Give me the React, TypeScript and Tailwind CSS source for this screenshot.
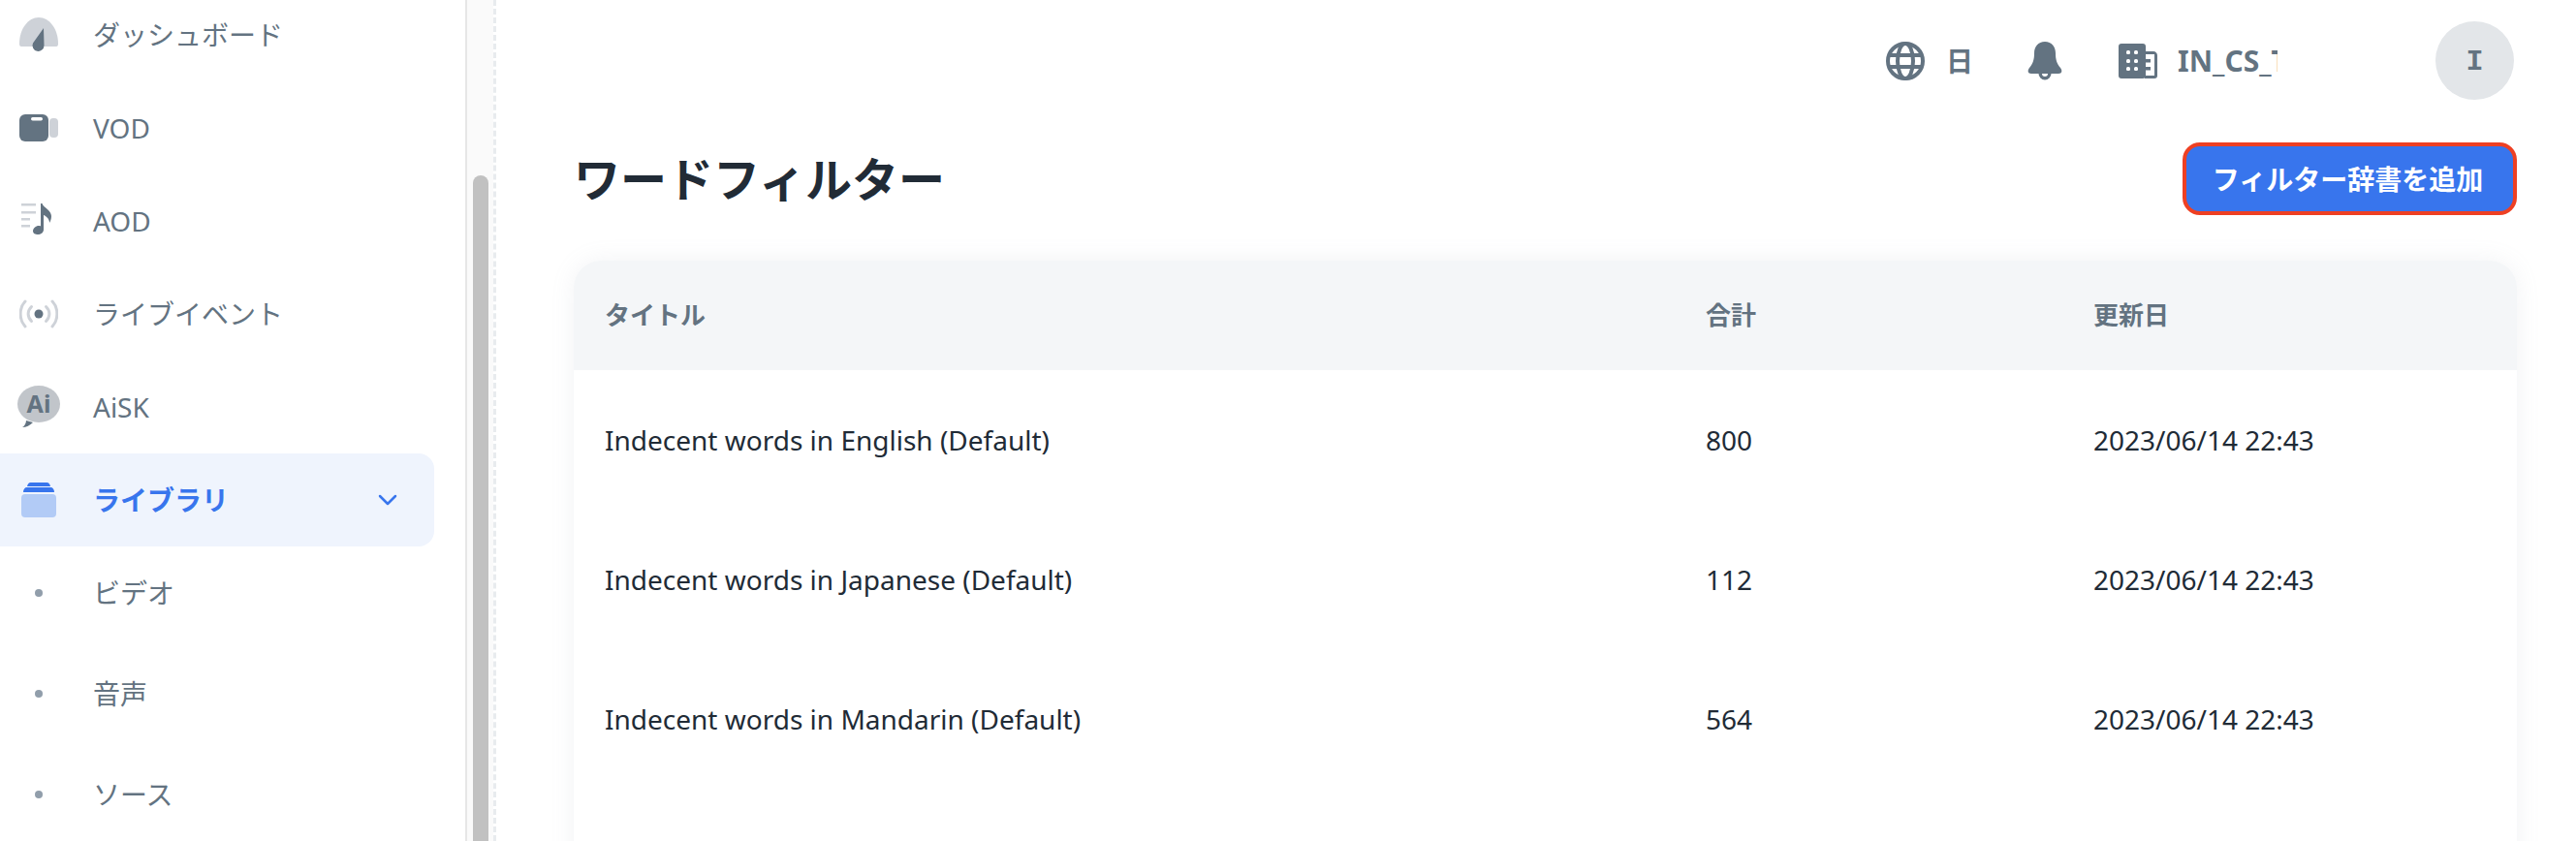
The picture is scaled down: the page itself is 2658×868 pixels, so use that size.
import React from "react";

const FONT = "font-['Noto_Sans','Noto_Sans_CJK_JP',sans-serif]";

function GaugeIcon() {
  return (
    <svg width="40" height="40" viewBox="0 0 40 40">
      <path d="M0 29C0 14 9 2 20 2s20 12 20 27c0 2-.5 3-2 3H2c-1.500 0-2-1-2-3z" fill="#ced2d8" />
      <path d="M25 13L25.500 31a6 6 0 1 1-11.500-2.500z" fill="#637381" />
    </svg>
  );
}

function VideoIcon() {
  return (
    <svg width="40" height="28" viewBox="0 0 40 28">
      <rect x="31" y="4" width="9" height="20" rx="4" fill="#ced2d8" />
      <rect x="0" y="0" width="30" height="28" rx="6" fill="#637381" />
      <rect x="12" y="3" width="12" height="3.500" rx="1.700" fill="#fff" />
    </svg>
  );
}

function AudioIcon() {
  return (
    <svg width="40" height="32" viewBox="0 0 40 32" className="-mt-1">
      <g fill="#ced2d8">
        <rect x="2" y="0" width="15" height="2.500" />
        <rect x="2" y="8" width="15" height="2.500" />
        <rect x="2" y="15" width="9" height="2.500" />
        <rect x="2" y="22" width="9" height="2.500" />
      </g>
      <path d="M22 0h1.500c1 4 9.500 7 9.500 13 0 3-1 5.500-2 7 .3-4-4-7.500-6-8v15c0 3-3 5-6 5-2.500 0-5-1-5-3.500 0-3 3-5.500 6-5.500 1 0 1.500.2 2 .4z" fill="#637381" />
    </svg>
  );
}

function LiveIcon() {
  return (
    <svg width="40" height="30" viewBox="0 0 40 30" fill="none" strokeLinecap="round">
      <path d="M6 2C-.5 9-.5 21 6 28M34 2c6.500 7 6.500 19 0 26" stroke="#ced2d8" strokeWidth="3" />
      <path d="M12.500 7.500C8 12 8 18 12.500 22.500M27.500 7.500c4.500 4.500 4.500 10.500 0 15" stroke="#ced2d8" strokeWidth="3" />
      <circle cx="20" cy="15" r="4.500" fill="#637381" />
    </svg>
  );
}

function AiIcon() {
  return (
    <div className="relative w-[44px] h-[44px]">
      <svg width="44" height="44" viewBox="0 0 44 44" className="absolute left-0 top-0">
        <path d="M5 43c2-1 4-4 4-7l7 2c-3 3-7 5-11 5z" fill="#637381" />
        <ellipse cx="22" cy="19" rx="22" ry="19" fill="#c1c5ca" />
      </svg>
      <span className="absolute inset-0 text-center text-[25px] leading-[36px] font-bold text-[#637381]">Ai</span>
    </div>
  );
}

function LibraryIcon() {
  return (
    <svg width="36" height="36" viewBox="0 0 36 36">
      <path d="M6 4c.5-2.500 2-4 3.500-4h17c1.500 0 3 1.500 3.500 4z" fill="#3875ed" />
      <path d="M2 10c0-3 1.500-5 4-5h24c2.500 0 4 2 4 5z" fill="#3875ed" />
      <rect x="0" y="12" width="36" height="24" rx="4" fill="#b2cbf6" />
    </svg>
  );
}

function NavRow({ icon, label }: { icon: React.ReactNode; label: string }) {
  return (
    <div className="h-24 flex items-center">
      <div className="w-[80px] flex justify-center pl-0">{icon}</div>
      <span className="ml-4 text-[28px] text-[#637381]">{label}</span>
    </div>
  );
}

function SubRow({ label }: { label: string }) {
  return (
    <div className="h-24 flex items-center">
      <div className="w-[80px] flex justify-center">
        <span className="w-2 h-2 rounded-full bg-[#919eab]" />
      </div>
      <span className="ml-4 text-[28px] text-[#637381]">{label}</span>
    </div>
  );
}

const rows = [
  { title: "Indecent words in English (Default)", total: "800", updated: "2023/06/14 22:43" },
  { title: "Indecent words in Japanese (Default)", total: "112", updated: "2023/06/14 22:43" },
  { title: "Indecent words in Mandarin (Default)", total: "564", updated: "2023/06/14 22:43" },
];

export default function App() {
  return (
    <div className={`${FONT} w-[2658px] h-[868px] flex overflow-hidden bg-white`}>
      <aside className="w-[480px] shrink-0 -mt-3">
        <NavRow icon={<GaugeIcon />} label="ダッシュボード" />
        <NavRow icon={<VideoIcon />} label="VOD" />
        <NavRow icon={<AudioIcon />} label="AOD" />
        <NavRow icon={<LiveIcon />} label="ライブイベント" />
        <NavRow icon={<AiIcon />} label="AiSK" />
        <div className="h-24 w-[448px] flex items-center bg-[#eff4fd] rounded-r-[16px]">
          <div className="w-[80px] flex justify-center">
            <LibraryIcon />
          </div>
          <span className="ml-4 text-[28px] font-bold text-[#3875ed]">ライブラリ</span>
          <svg width="20" height="12" viewBox="0 0 20 12" fill="none" className="ml-auto mr-[38px]">
            <path d="M2 2l8 8 8-8" stroke="#3875ed" strokeWidth="2.500" strokeLinecap="round" strokeLinejoin="round" />
          </svg>
        </div>
        <div className="flex flex-col gap-2">
          <SubRow label="ビデオ" />
          <SubRow label="音声" />
          <SubRow label="ソース" />
        </div>
      </aside>

      {/* scrollbar of the sidebar */}
      <div className="w-[29px] shrink-0 border-l-2 border-[#e6e6e6] bg-[#fafafa] pl-[6px]">
        <div className="w-4 mt-[181px] h-[700px] rounded-t-full bg-[#c1c1c1]" />
      </div>
      <div className="w-[3px] shrink-0 border-l-[3px] border-dashed border-[#e8ebee]" />

      <main className="flex-1 min-w-0 pl-[80px] pr-[61px]">
        <header className="h-[125px] flex items-center text-[#637381]">
          <svg width="40" height="40" viewBox="0 0 40 40" fill="none" stroke="#637381" strokeWidth="4" className="ml-auto">
            <circle cx="20" cy="20" r="18" />
            <ellipse cx="20" cy="20" rx="8" ry="18" />
            <path d="M3 14h34M3 26h34" />
          </svg>
          <span className="ml-[22px] w-[83px] text-[28px] font-bold">日</span>
          <svg width="38" height="40" viewBox="0 0 38 40" fill="#637381">
            <path d="M19 0c7 0 11 5 11 12 0 6 1 10 5 15 2 2.500 2 6-2 6H5c-4 0-4-3.500-2-6 4-5 5-9 5-15C8 5 12 0 19 0z" />
            <path d="M12.500 33a6.500 6.500 0 0 0 13 0h-3.500a3 3 0 0 1-6 0z" />
          </svg>
          <svg width="40" height="36" viewBox="0 0 40 36" className="ml-[57px]">
            <rect x="0" y="0" width="28" height="36" rx="3" fill="#637381" />
            <path d="M27 8h9c2 0 4 2 4 4v21c0 2-1 3-3 3H27z" fill="#637381" />
            <rect x="28" y="11" width="9" height="22" fill="#fff" />
            <g fill="#fff">
              <rect x="8" y="7" width="4" height="4" rx="1.500" /><rect x="16" y="7" width="4" height="4" rx="1.500" />
              <rect x="8" y="16" width="4" height="4" rx="1.500" /><rect x="16" y="16" width="4" height="4" rx="1.500" />
              <rect x="8" y="24" width="4" height="4" rx="1.500" /><rect x="16" y="24" width="4" height="4" rx="1.500" />
            </g>
            <rect x="28" y="16" width="5" height="3.500" fill="#637381" />
            <rect x="28" y="24" width="5" height="3.500" fill="#637381" />
          </svg>
          <div className="ml-[21px] w-[103px] overflow-hidden whitespace-nowrap text-[30px] font-bold">IN_CS_TEST</div>
          <div className="ml-[163px] mr-[3px] pt-[3px] w-[81px] h-[81px] rounded-full bg-[#e3e6e9] flex items-center justify-center font-['Liberation_Mono',monospace] font-bold text-[30px]">
            I
          </div>
        </header>

        <div className="mt-[22px] h-[75px] flex items-center justify-between">
          <h1 className="text-[48px] font-bold text-[#212b36]">ワードフィルター</h1>
          <button className="w-[345px] h-[75px] pr-1 rounded-[18px] bg-[#3875ed] border-[4px] border-[#ee4023] text-white text-[28px] font-bold">
            フィルター辞書を追加
          </button>
        </div>

        <section className="mt-[47px] rounded-t-[28px] bg-white shadow-[0_0_24px_rgba(145,158,171,0.12)] h-[700px]">
          <div className="h-[113px] grid grid-cols-[1136px_400px_1fr] items-center px-8 bg-[#f4f6f8] rounded-t-[28px] text-[26px] font-bold text-[#637381]">
            <span>タイトル</span>
            <span>合計</span>
            <span>更新日</span>
          </div>
          {rows.map((r) => (
            <div key={r.title} className="h-36 grid grid-cols-[1136px_400px_1fr] items-center px-8 text-[28px] text-[#212b36]">
              <span>{r.title}</span>
              <span>{r.total}</span>
              <span>{r.updated}</span>
            </div>
          ))}
        </section>
      </main>
    </div>
  );
}
